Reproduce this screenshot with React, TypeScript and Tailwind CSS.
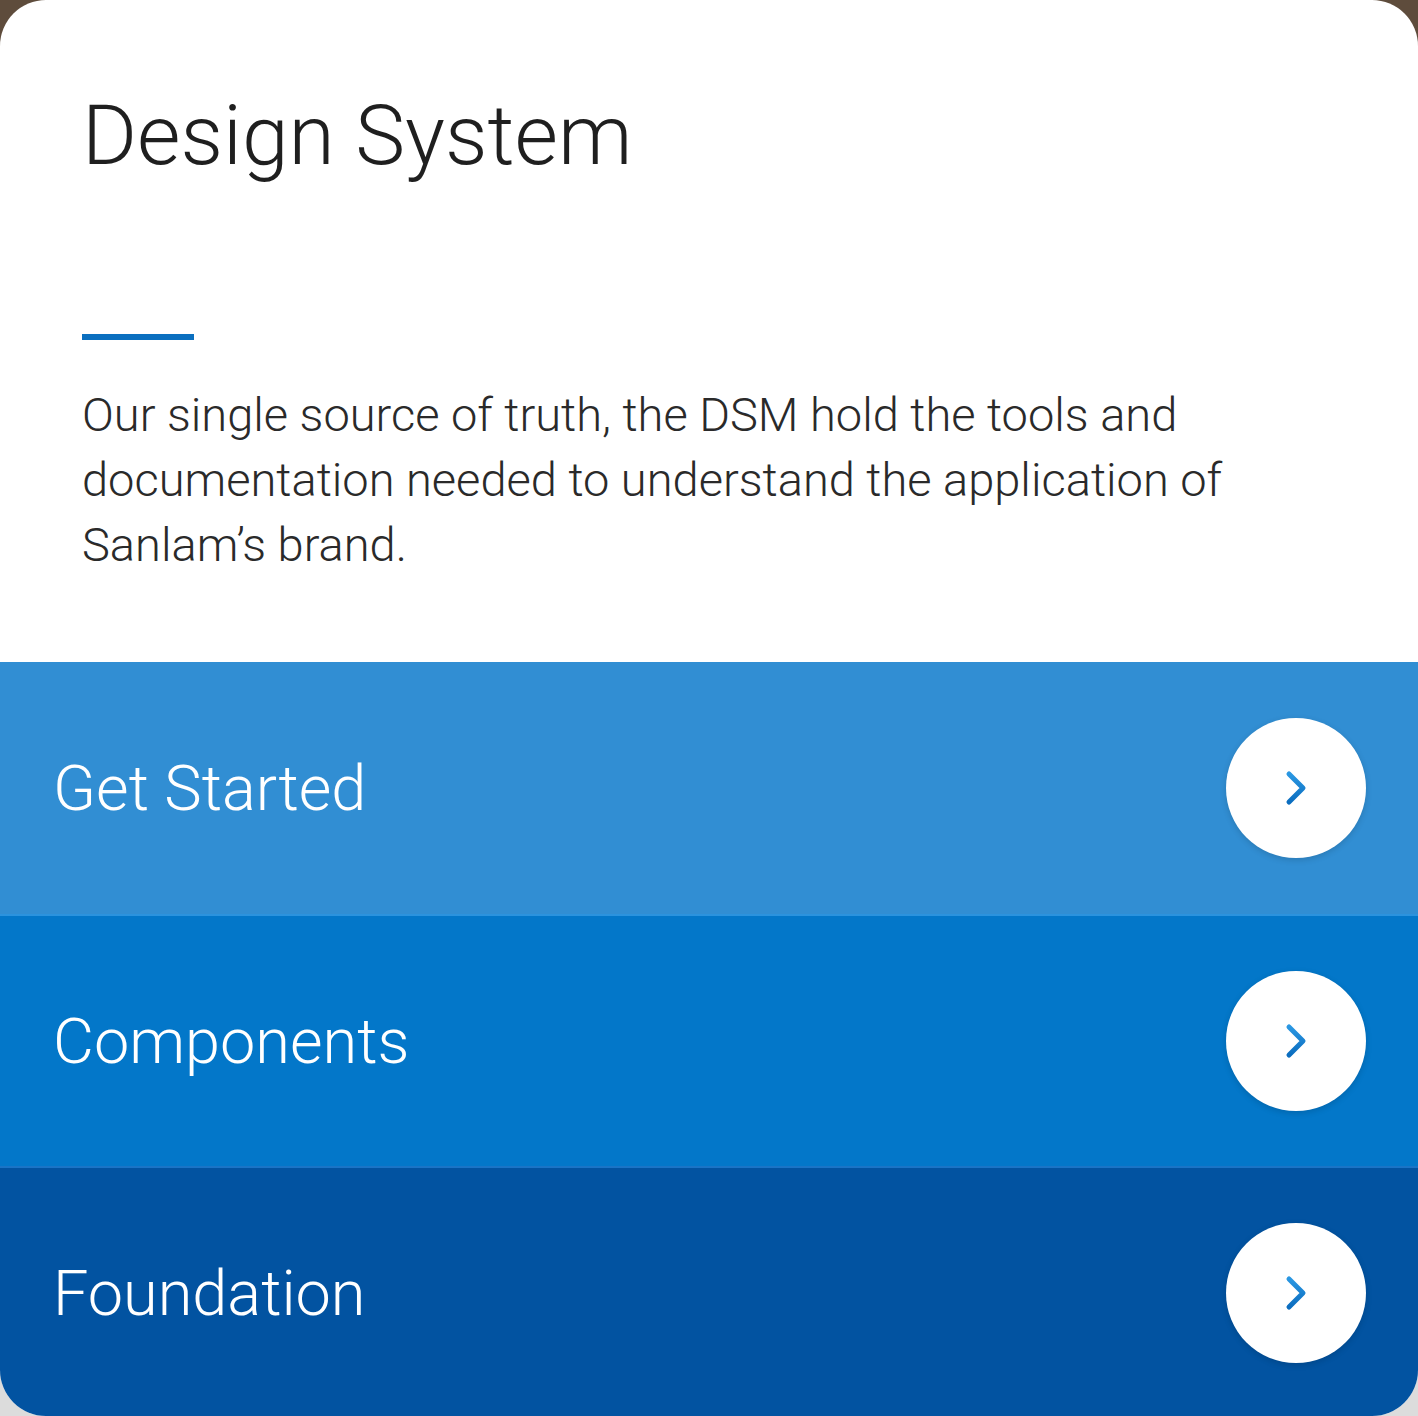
import React from 'react';

const rows = [
  { label: 'Get Started', bg: 'bg-[#318ed3]', edge: 'border-t-0' },
  { label: 'Components', bg: 'bg-[#0377c9]', edge: 'border-t-2 border-[#2b93de]' },
  { label: 'Foundation', bg: 'bg-[#0253a1]', edge: 'border-t-2 border-[#1a74c6]' },
];

const Chevron: React.FC<{ id: string }> = ({ id }) => (
  <svg width="24" height="36" viewBox="0 0 24 36" fill="none">
    <defs>
      <linearGradient id={id} x1="0" y1="0" x2="0" y2="1">
        <stop offset="0" stopColor="#2a97e2" />
        <stop offset="1" stopColor="#0b6dbf" />
      </linearGradient>
    </defs>
    <path d="M5 4 L19 18 L5 32" stroke={`url(#${id})`} strokeWidth="5" strokeLinecap="round" strokeLinejoin="round" />
  </svg>
);

export default function App() {
  return (
    <div className="w-[1418px] h-[1416px] overflow-hidden bg-[linear-gradient(to_bottom,#5e4c3c_50%,#dcdcdc_50%)] font-['Roboto',_'Liberation_Sans',_sans-serif]">
      <div className="w-full h-full rounded-[46px] overflow-hidden bg-white flex flex-col">
        <div className="h-[662px] shrink-0 pl-[82px] pt-[94px] flex flex-col">
          <h1 className="text-[84px] leading-none font-light text-[#1f1f1f]">Design System</h1>
          <div className="mt-[156px] w-[112px] h-[6px] bg-[#0b6fbf]" />
          <p className="mt-[42px] w-[1220px] text-[47px] leading-[65px] font-light text-[#2a2a2a]">
            Our single source of truth, the DSM hold the tools and documentation needed to understand the application of Sanlam’s brand.
          </p>
        </div>
        {rows.map((r, i) => (
          <div key={r.label} className={`h-[252px] shrink-0 flex items-center justify-between pl-[53px] pr-[52px] ${r.bg} ${r.edge}`}>
            <span className="text-[63px] font-light text-white leading-none">{r.label}</span>
            <div className="w-[140px] h-[140px] rounded-full bg-white flex items-center justify-center shadow-[0_2px_6px_rgba(0,0,0,0.15)]">
              <Chevron id={`chev${i}`} />
            </div>
          </div>
        ))}
      </div>
    </div>
  );
}
